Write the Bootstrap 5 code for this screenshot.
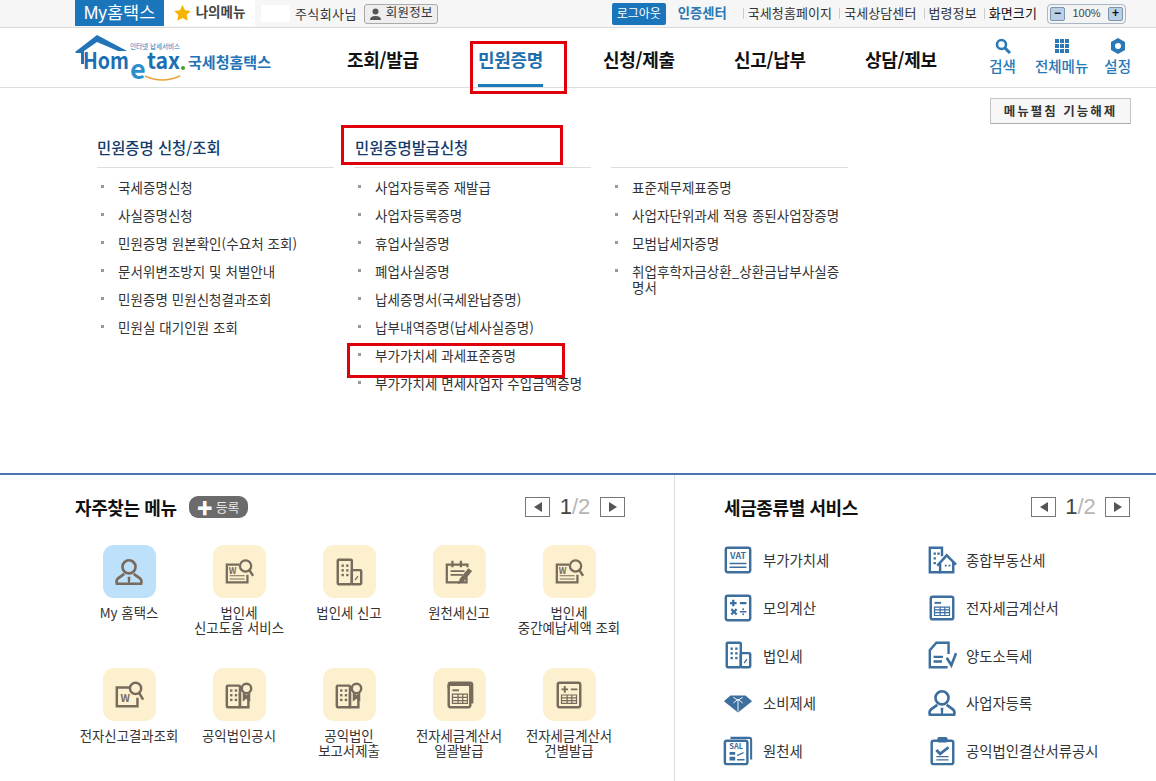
<!DOCTYPE html>
<html lang="ko">
<head>
<meta charset="utf-8">
<title>Hometax</title>
<link href="https://cdn.jsdelivr.net/npm/bootstrap@5.3.0/dist/css/bootstrap.min.css" rel="stylesheet">
<style>
html,body{height:781px;overflow:hidden}
body{font-family:"Liberation Sans","Noto Sans CJK KR",sans-serif;font-size:12px;color:#222;background:#fff}
.ko{font-family:"Noto Sans CJK KR","Liberation Sans",sans-serif}
svg text{font-family:"Noto Sans CJK KR","Liberation Sans",sans-serif}
a{color:inherit;text-decoration:none}
.topbar{height:28px;background:#f6f6f6;border-bottom:1px solid #dcdcdc;padding:0 30px 0 75px}
.mytab{width:89px;height:26px;background:#1b75bb;color:#fff;font-size:17.5px;line-height:26px;text-align:center}
.mymenu{width:91px;height:26px;background:#fff;font-size:13.500px;font-weight:700;color:#444}
.mymenu svg{margin-right:5px}
.blankbox{width:29px;height:17px;background:#fff;margin-left:6px}
.corp{margin-left:5px;font-size:13px;letter-spacing:.4px;color:#333;padding-top:3px}
.memberbtn{margin-left:7px;width:74px;height:20px;border:1px solid #aaa;border-radius:3px;background:#eee;font-size:12.500px;color:#333;letter-spacing:.3px;white-space:nowrap}
.logout{width:54px;height:22px;background:#1b75bb;border-radius:2px;color:#fff;font-size:12px}
.certlink{margin:0 16px 0 12px;color:#2a78b5;font-weight:700;font-size:13.300px;white-space:nowrap}
.toplink{font-size:13px;letter-spacing:.1px;color:#333;white-space:nowrap;line-height:11px;border-left:1px solid #ccc;padding-left:4px}
.toplink+.toplink{margin-left:7px}
.toplink-dark{color:#111}
.zoombox{margin-left:10px;width:79px;height:20px;border:1px solid #a9b6c6;border-radius:4px;background:#f3f3f3;padding:0 2px;font-size:11px;color:#444}
.zoomkey{width:15px;height:14px;background:#b9cfe6;border:1px solid #7d94ad;border-radius:2px;color:#111;font-size:12px;line-height:11px;text-align:center;font-weight:700}
.mainbar{height:60px;border-bottom:1px solid #ddd;padding:0 25px 0 75px}
.logobox{width:272px}
.gnb{gap:60px}
.gnbitem{position:relative;display:block;width:71px;height:59px;line-height:63px;font-size:18px;font-weight:700;color:#111;text-align:center;white-space:nowrap;letter-spacing:-.3px}
.gnbitem.on{color:#1d6fae;border-bottom:3px solid #1d7ab8;width:65px}
.mark-red{position:absolute;border:3px solid #e0000c;pointer-events:none;z-index:5}
.mr1{left:-8px;top:13px;width:97px;height:53px}
.mr2{left:-14px;top:-11px;width:222px;height:40px}
.mr3{left:-28px;top:-2px;width:218px;height:35px}
.util{gap:16px;color:#2a78b5;font-size:14.500px}
.utilitem{display:flex;flex-direction:column;align-items:center;white-space:nowrap;line-height:16px;font-weight:500;padding-top:10px}
.utilitem:first-child{margin-right:3px}
.utilitem svg{margin-bottom:4px}
.megamenu{height:387px;border-bottom:2px solid #4a74b4;padding:10px 25px 0 97px}
.foldbtn{width:141px;height:26px;border:1px solid #c4c4c4;border-bottom-color:#aaa;background:#f7f7f7;border-radius:1px;font-size:12.500px;font-weight:700;color:#333;letter-spacing:2px;white-space:nowrap}
.megacols{gap:20px;margin-top:0}
.megacol{width:237px}
.megahead{position:relative;height:44px;padding-top:10px;border-bottom:1px solid #ddd;font-size:15.400px;line-height:26px;font-weight:500;color:#123a6b;white-space:nowrap}
.megacol.colb .megahead span{position:relative;margin-left:1px}
.megalist{list-style:none;margin:5px 0 0;padding:0 0 0 4px}
.megalist li{position:relative;padding-left:17px;min-height:28px;line-height:16px;padding-top:6px;font-size:13.500px;letter-spacing:.05px;color:#333}
.megalist li::before{content:"";position:absolute;left:0;top:12px;width:3px;height:3px;background:#999}
.bottomwrap{height:306px}
.leftpane{width:675px;border-right:1px solid #ddd;padding:17px 49px 0 75px}
.rightpane{flex:1;padding:17px 26px 0 49px}
.panehead{height:30px}
.panetitle{font-size:18px;font-weight:700;color:#111;letter-spacing:-.4px;line-height:30px;margin:0}
.regpill{margin-left:12px;width:59px;height:22px;border-radius:9px;background:#6b6b6b;color:#e8e8e8;font-size:13px}
.regpill b{font-size:16px;color:#fff;margin-right:3px;line-height:1}
.pagerbtn{width:25px;height:20px;border:1px solid #777;background:#fff;padding:0}
.pagernum{width:50px;text-align:center;font-family:"Liberation Sans",sans-serif;font-size:22px;color:#b5b5b5;line-height:20px}
.rightpane .pagernum{width:49px}
.pagernum b{font-weight:400;color:#444}
.tilegrid{display:grid;grid-template-columns:repeat(5,110px);grid-auto-rows:123px;margin:23px 0 0 -1px;width:550px}
.tile{display:flex;flex-direction:column;align-items:center;text-align:center;font-size:13.400px;line-height:15px;color:#333;white-space:nowrap}
.tileicon{width:53px;height:53px;border-radius:11px;background:#fdf0cf;color:#786a5c;display:flex;align-items:center;justify-content:center;margin-bottom:7px}
.tileicon.sky{background:#bde0fb}
.svcgrid{display:grid;grid-template-columns:204px 1fr;grid-auto-rows:47.7px;margin-top:23px}
.svc{display:flex;align-items:center;font-size:14.400px;color:#333;white-space:nowrap;height:30px}
.svc svg{color:#3c6e9e;margin-right:10px;margin-left:-1px;flex:none}
.svc:nth-child(even) svg{margin-right:9px}
</style>
</head>
<body>
<svg width="0" height="0" class="position-absolute">
<defs>
<symbol id="i-person" viewBox="0 0 32 32"><g fill="none" stroke="currentColor" stroke-width="2.800"><circle cx="16" cy="10.500" r="7"/><path d="M11 18 4 23q-2 2-1 5.500h26q1-3.500-1-5.500l-7-5"/></g><path d="M14.500 21h3l-.5 7h-2z" fill="currentColor"/></symbol>
<symbol id="i-taxdoc" viewBox="0 0 32 32"><g fill="none" stroke="currentColor" stroke-width="2.400"><path d="M16 8H3v19h22V19"/><circle cx="23" cy="9.500" r="6"/><path d="M27 14l4 6" stroke-width="2.600"/><path d="M6 20h16M6 23.500h16" stroke-width="1.200"/></g><text x="5" y="18" font-size="9" font-weight="700" fill="currentColor">W</text></symbol>
<symbol id="i-calc-w" viewBox="0 0 32 32"><g fill="none" stroke="currentColor" stroke-width="2.600"><path d="M16 8H3v20h22V19"/><circle cx="23" cy="9" r="6"/><path d="M27 14l4 7"/></g><text x="7" y="23" font-size="11" font-weight="700" fill="currentColor">W</text></symbol>
<symbol id="i-build" viewBox="0 0 32 32"><g fill="none" stroke="currentColor" stroke-width="2.600"><rect x="4" y="3" width="15" height="26" rx="1"/><rect x="19" y="14" width="10" height="15" rx="1"/></g><g fill="currentColor"><rect x="8" y="8" width="2.500" height="2.500"/><rect x="13" y="8" width="2.500" height="2.500"/><rect x="8" y="13" width="2.500" height="2.500"/><rect x="13" y="13" width="2.500" height="2.500"/><rect x="8" y="18" width="2.500" height="2.500"/><rect x="13" y="18" width="2.500" height="2.500"/><path d="M22 24l3-4 1 1-3 4z"/></g></symbol>
<symbol id="i-cal" viewBox="0 0 32 32"><g fill="none" stroke="currentColor" stroke-width="2.400"><path d="M24 21v6H3V8h22v3"/><path d="M9 4v7M18 4v7"/></g><path d="M7 14h15v2H7zM7 18h13v2H7z" fill="currentColor"/><path d="M15 29l2-6 9-11 4 3-9 11z" fill="currentColor"/></symbol>
<symbol id="i-cert" viewBox="0 0 32 32"><g fill="none" stroke="currentColor" stroke-width="2.600"><rect x="3" y="6" width="14" height="23" rx="1"/><path d="M17 14v15h9V19"/><circle cx="24" cy="9" r="5"/></g><g fill="currentColor"><rect x="6.500" y="10" width="2.500" height="2.500"/><rect x="11.500" y="10" width="2.500" height="2.500"/><rect x="6.500" y="15" width="2.500" height="2.500"/><rect x="11.500" y="15" width="2.500" height="2.500"/><rect x="6.500" y="20" width="2.500" height="2.500"/><rect x="11.500" y="20" width="2.500" height="2.500"/><path d="M20 13l4 3 4-3v10l-4-3-4 3z"/></g></symbol>
<symbol id="i-inv" viewBox="0 0 32 32"><g fill="none" stroke="currentColor" stroke-width="2.600"><rect x="5" y="5" width="23" height="24" rx="2"/><path d="M5 9V5q0-2 2-2h21q2 0 2 2v20"/></g><g fill="none" stroke="currentColor" stroke-width="1.300"><path d="M9 15h16v10H9zM9 18.500h16M9 22h16M15 15v10M20 15v10"/></g><path d="M9 10h7v2H9z" fill="currentColor"/></symbol>
<symbol id="i-inv2" viewBox="0 0 32 32"><g fill="none" stroke="currentColor" stroke-width="2.600"><rect x="4" y="4" width="24" height="24" rx="2"/></g><g fill="none" stroke="currentColor" stroke-width="1.300"><path d="M8 15h16v9H8zM8 18h16M8 21h16M14 15v9M19 15v9"/></g><path d="M8 9.500h7v2H8z" fill="currentColor"/></symbol>
<symbol id="i-calc2" viewBox="0 0 32 32"><rect x="4" y="3" width="24" height="26" rx="2" fill="none" stroke="currentColor" stroke-width="2.600"/><path d="M8 9h7v2H8zM10.500 6.500h2v7h-2zM18 9h7v2h-7z" fill="currentColor"/><g fill="none" stroke="currentColor" stroke-width="1.300"><path d="M8 16h16v9H8zM8 19h16M8 22h16M14 16v9M19 16v9"/></g></symbol>
<symbol id="i-vat" viewBox="0 0 32 32"><rect x="3" y="3" width="26" height="26" rx="2" fill="none" stroke="currentColor" stroke-width="2.600"/><text x="16" y="15" text-anchor="middle" font-size="9.500" font-weight="700" fill="currentColor">VAT</text><path d="M7 19h18v1.500H7zM7 23h18v1.500H7z" fill="currentColor"/></symbol>
<symbol id="i-math" viewBox="0 0 32 32"><rect x="3" y="3" width="26" height="26" rx="2" fill="none" stroke="currentColor" stroke-width="2.600"/><path d="M7.500 9.500h7v2.500h-7zM9.700 7.200h2.500v7H9.700zM18 9.500h7v2.500h-7zM8 18l1.700-1.700 2 2 2-2 1.700 1.700-2 2 2 2-1.700 1.700-2-2-2 2L8 22l2-2zM18 19.200h7v1.500h-7z" fill="currentColor"/><circle cx="21.500" cy="17.300" r="1" fill="currentColor"/><circle cx="21.500" cy="22.700" r="1" fill="currentColor"/></symbol>
<symbol id="i-gem" viewBox="0 0 32 32"><path d="M1 14 8 8h16l7 6-15 12z" fill="currentColor"/><path d="M11 10l5 3 5-3M16 13v12" fill="none" stroke="#fff" stroke-width="1"/><path d="M11 16l5-4 5 4" fill="none" stroke="#fff" stroke-width="1"/></symbol>
<symbol id="i-sal" viewBox="0 0 32 32"><path d="M8 2h20q2 0 2 2v21" fill="none" stroke="currentColor" stroke-width="2.200"/><rect x="2" y="5" width="24" height="25" rx="2" fill="none" stroke="currentColor" stroke-width="2.600"/><text x="14" y="14" text-anchor="middle" font-size="8" font-weight="700" fill="currentColor">SAL</text><path d="M7 17h6v3H7zM7 22h6v4H7zM15 20l7-3v1.500l-7 3zM15 24.500h8V26h-8z" fill="currentColor"/></symbol>
<symbol id="i-estate" viewBox="0 0 32 32"><g fill="none" stroke="currentColor" stroke-width="2.600"><path d="M14 29H3V3h13v9"/><path d="M11 22 21 11l10 10M14 19v10h14V18"/></g><path d="M7 8h2.500v2.500H7zM11 8h2.500v2.500H11zM7 13h2.500v2.500H7zM7 18h2.500v2.500H7zM19 21h2v2h-2zM23 21h2v2h-2z" fill="currentColor"/></symbol>
<symbol id="i-pen" viewBox="0 0 32 32"><g fill="none" stroke="currentColor" stroke-width="2.600"><path d="M23 15V3H10L3 11v18h19"/><path d="M7 18h10M7 23h9"/><path d="M21 19l5 8 5-13" stroke-width="2.800"/></g></symbol>
<symbol id="i-clip" viewBox="0 0 32 32"><g fill="none" stroke="currentColor" stroke-width="2.600"><rect x="5" y="5" width="23" height="25" rx="2"/><path d="M10 15l4 4 9-7" stroke-width="3"/><path d="M10 22h13M10 25.500h13" stroke-width="1.400"/></g><rect x="11" y="1" width="11" height="6" rx="2" fill="currentColor"/></symbol>
</defs>
</svg>

<div class="topbar d-flex justify-content-between">
  <div class="d-flex">
    <a href="#" class="mytab">My홈택스</a>
    <a href="#" class="mymenu d-flex align-items-center justify-content-center">
      <svg width="17" height="16" viewBox="0 0 24 23"><path d="M12 0l3.700 7.600 8.300 1.100-6 5.800 1.500 8.300L12 18.800 4.500 22.800 6 14.500 0 8.700l8.300-1.100z" fill="#f5b400"/></svg>나의메뉴</a>
    <span class="blankbox align-self-center"></span>
    <span class="corp d-flex align-items-center">주식회사님</span>
    <a href="#" class="memberbtn d-flex align-items-center justify-content-center align-self-center">
      <svg width="13" height="12" viewBox="0 0 13 12" class="me-1"><circle cx="6.500" cy="3.500" r="3" fill="#555"/><path d="M1 12q0-4 5.500-4t5.500 4z" fill="#555"/></svg>회원정보</a>
  </div>
  <div class="d-flex align-items-center">
    <a href="#" class="logout d-flex align-items-center justify-content-center">로그아웃</a>
    <a href="#" class="certlink">인증센터</a>
    <a href="#" class="toplink">국세청홈페이지</a>
    <a href="#" class="toplink">국세상담센터</a>
    <a href="#" class="toplink">법령정보</a>
    <a href="#" class="toplink toplink-dark">화면크기</a>
    <div class="zoombox d-flex align-items-center justify-content-between">
      <span class="zoomkey">−</span><span>100%</span><span class="zoomkey">+</span>
    </div>
  </div>
</div>

<div class="mainbar d-flex">
  <a href="#" class="logobox d-block">
    <svg width="200" height="60" viewBox="0 0 200 60">
      <path d="M0 24 22 7 52 23H43L22 14 9 23V36H6V25H1z" fill="#2273b8"/>
      <text x="55" y="21" font-size="6.500" fill="#2273b8" textLength="50" lengthAdjust="spacingAndGlyphs">인터넷 납세서비스</text>
      <text x="8" y="41" font-family="Liberation Sans" font-size="22" font-weight="700" fill="#1d6fb5" textLength="46" lengthAdjust="spacingAndGlyphs">Hom</text>
      <text x="55" y="51" font-family="Liberation Sans" font-size="27" font-weight="700" fill="#2a8fcf">e</text>
      <text x="72" y="41" font-family="Liberation Sans" font-size="22" font-weight="700" fill="#1d6fb5" textLength="33" lengthAdjust="spacingAndGlyphs">tax</text>
      <circle cx="108" cy="40" r="2" fill="#4a9e2e"/>
      <path d="M70 48q17 8 35 0" fill="none" stroke="#e9a23b" stroke-width="1.500"/>
      <text x="113" y="40" font-size="15" font-weight="700" fill="#2273b8" textLength="83" lengthAdjust="spacingAndGlyphs">국세청홈택스</text>
    </svg>
  </a>
  <nav class="gnb d-flex ko">
    <a href="#" class="gnbitem">조회/발급</a>
    <a href="#" class="gnbitem on">민원증명<span class="mark-red mr1"></span></a>
    <a href="#" class="gnbitem">신청/제출</a>
    <a href="#" class="gnbitem">신고/납부</a>
    <a href="#" class="gnbitem">상담/제보</a>
  </nav>
  <div class="util d-flex ms-auto ko">
    <a href="#" class="utilitem"><svg width="16" height="16" viewBox="0 0 16 16"><circle cx="6.500" cy="6.500" r="4.500" fill="none" stroke="#2a78b5" stroke-width="2.600"/><path d="M10 10l5 5" stroke="#2a78b5" stroke-width="3"/></svg>검색</a>
    <a href="#" class="utilitem"><svg width="16" height="16" viewBox="0 0 16 16" fill="#2a78b5"><rect x="1" y="1" width="4" height="4"/><rect x="6" y="1" width="4" height="4"/><rect x="11" y="1" width="4" height="4"/><rect x="1" y="6" width="4" height="4"/><rect x="6" y="6" width="4" height="4"/><rect x="11" y="6" width="4" height="4"/><rect x="1" y="11" width="4" height="4"/><rect x="6" y="11" width="4" height="4"/><rect x="11" y="11" width="4" height="4"/></svg>전체메뉴</a>
    <a href="#" class="utilitem"><svg width="16" height="16" viewBox="0 0 16 16"><path d="M8 0l7 4v8l-7 4-7-4V4z" fill="#2a78b5"/><circle cx="8" cy="8" r="3" fill="#fff"/></svg>설정</a>
  </div>
</div>

<section class="megamenu ko">
  <div class="d-flex justify-content-end">
    <button type="button" class="foldbtn d-flex align-items-center justify-content-center">메뉴펼침 기능해제</button>
  </div>
  <div class="megacols d-flex">
    <div class="megacol">
      <div class="megahead">민원증명 신청/조회</div>
      <ul class="megalist">
        <li>국세증명신청</li><li>사실증명신청</li><li>민원증명 원본확인(수요처 조회)</li><li>문서위변조방지 및 처벌안내</li><li>민원증명 민원신청결과조회</li><li>민원실 대기인원 조회</li>
      </ul>
    </div>
    <div class="megacol colb">
      <div class="megahead"><span>민원증명발급신청<i class="mark-red mr2"></i></span></div>
      <ul class="megalist">
        <li>사업자등록증 재발급</li><li>사업자등록증명</li><li>휴업사실증명</li><li>폐업사실증명</li><li>납세증명서(국세완납증명)</li><li>납부내역증명(납세사실증명)</li><li><span class="position-relative">부가가치세 과세표준증명<i class="mark-red mr3"></i></span></li><li>부가가치세 면세사업자 수입금액증명</li>
      </ul>
    </div>
    <div class="megacol">
      <div class="megahead"></div>
      <ul class="megalist">
        <li>표준재무제표증명</li><li>사업자단위과세 적용 종된사업장증명</li><li>모범납세자증명</li><li>취업후학자금상환_상환금납부사실증<br>명서</li>
      </ul>
    </div>
  </div>
</section>

<div class="bottomwrap d-flex ko">
  <section class="leftpane">
    <div class="panehead d-flex align-items-center">
      <h2 class="panetitle">자주찾는 메뉴</h2>
      <a href="#" class="regpill d-flex align-items-center justify-content-center"><b>✚</b>등록</a>
      <div class="d-flex align-items-center ms-auto">
        <button type="button" class="pagerbtn d-flex align-items-center justify-content-center" aria-label="이전"><svg width="8" height="10"><path d="M8 0v10L0 5z" fill="#555"/></svg></button>
        <span class="pagernum"><b>1</b>/2</span>
        <button type="button" class="pagerbtn d-flex align-items-center justify-content-center" aria-label="다음"><svg width="8" height="10"><path d="M0 0v10l8-5z" fill="#555"/></svg></button>
      </div>
    </div>
    <div class="tilegrid">
      <a href="#" class="tile"><span class="tileicon sky"><svg width="30" height="30"><use href="#i-person"/></svg></span>My 홈택스</a>
      <a href="#" class="tile"><span class="tileicon"><svg width="30" height="30"><use href="#i-taxdoc"/></svg></span>법인세<br>신고도움 서비스</a>
      <a href="#" class="tile"><span class="tileicon"><svg width="30" height="30"><use href="#i-build"/></svg></span>법인세 신고</a>
      <a href="#" class="tile"><span class="tileicon"><svg width="30" height="30"><use href="#i-cal"/></svg></span>원천세신고</a>
      <a href="#" class="tile"><span class="tileicon"><svg width="30" height="30"><use href="#i-taxdoc"/></svg></span>법인세<br>중간예납세액 조회</a>
      <a href="#" class="tile"><span class="tileicon"><svg width="30" height="30"><use href="#i-calc-w"/></svg></span>전자신고결과조회</a>
      <a href="#" class="tile"><span class="tileicon"><svg width="30" height="30"><use href="#i-cert"/></svg></span>공익법인공시</a>
      <a href="#" class="tile"><span class="tileicon"><svg width="30" height="30"><use href="#i-cert"/></svg></span>공익법인<br>보고서제출</a>
      <a href="#" class="tile"><span class="tileicon"><svg width="30" height="30"><use href="#i-inv"/></svg></span>전자세금계산서<br>일괄발급</a>
      <a href="#" class="tile"><span class="tileicon"><svg width="30" height="30"><use href="#i-calc2"/></svg></span>전자세금계산서<br>건별발급</a>
    </div>
  </section>
  <section class="rightpane">
    <div class="panehead d-flex align-items-center">
      <h2 class="panetitle">세금종류별 서비스</h2>
      <div class="d-flex align-items-center ms-auto">
        <button type="button" class="pagerbtn d-flex align-items-center justify-content-center" aria-label="이전"><svg width="8" height="10"><path d="M8 0v10L0 5z" fill="#555"/></svg></button>
        <span class="pagernum"><b>1</b>/2</span>
        <button type="button" class="pagerbtn d-flex align-items-center justify-content-center" aria-label="다음"><svg width="8" height="10"><path d="M0 0v10l8-5z" fill="#555"/></svg></button>
      </div>
    </div>
    <div class="svcgrid">
      <a href="#" class="svc"><svg width="30" height="30"><use href="#i-vat"/></svg>부가가치세</a>
      <a href="#" class="svc"><svg width="30" height="30"><use href="#i-estate"/></svg>종합부동산세</a>
      <a href="#" class="svc"><svg width="30" height="30"><use href="#i-math"/></svg>모의계산</a>
      <a href="#" class="svc"><svg width="30" height="30"><use href="#i-inv2"/></svg>전자세금계산서</a>
      <a href="#" class="svc"><svg width="30" height="30"><use href="#i-build"/></svg>법인세</a>
      <a href="#" class="svc"><svg width="30" height="30"><use href="#i-pen"/></svg>양도소득세</a>
      <a href="#" class="svc"><svg width="30" height="30"><use href="#i-gem"/></svg>소비제세</a>
      <a href="#" class="svc"><svg width="30" height="30"><use href="#i-person"/></svg>사업자등록</a>
      <a href="#" class="svc"><svg width="30" height="30"><use href="#i-sal"/></svg>원천세</a>
      <a href="#" class="svc"><svg width="30" height="30"><use href="#i-clip"/></svg>공익법인결산서류공시</a>
    </div>
  </section>
</div>
<script src="https://cdn.jsdelivr.net/npm/bootstrap@5.3.0/dist/js/bootstrap.bundle.min.js"></script>
</body>
</html>
